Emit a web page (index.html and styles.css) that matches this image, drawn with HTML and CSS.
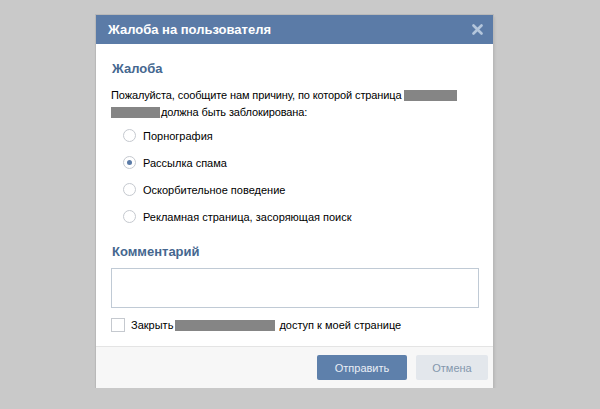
FILE: index.html
```html
<!DOCTYPE html>
<html lang="ru">
<head>
    <meta charset="UTF-8">
    <title>Жалоба на пользователя</title>
    <link rel="stylesheet" href="styles.css">
</head>
<body>
    <div class="box">
        <div class="box-title">
            <span>Жалоба на пользователя</span>
            <svg class="box-close" width="11" height="11" viewBox="0 0 11 11">
                <path d="M1.5 1.5 L9.5 9.5 M9.5 1.5 L1.5 9.5" stroke="#b4c6dc" stroke-width="2.6" stroke-linecap="round"/>
            </svg>
        </div>
        <div class="box-body">
            <h2>Жалоба</h2>
            <p class="reason-text">Пожалуйста, сообщите нам причину, по которой страница <span class="hidden-name name-a"></span><br><span class="hidden-name name-b"></span>должна быть заблокирована:</p>
            <div class="radios">
                <label class="radio"><span class="radio-dot"></span>Порнография</label>
                <label class="radio on"><span class="radio-dot"></span>Рассылка спама</label>
                <label class="radio"><span class="radio-dot"></span>Оскорбительное поведение</label>
                <label class="radio"><span class="radio-dot"></span>Рекламная страница, засоряющая поиск</label>
            </div>
            <h2 class="comment-head">Комментарий</h2>
            <div class="comment-field"></div>
            <label class="check"><span class="check-box"></span>Закрыть <span class="hidden-name name-c"></span>доступ к моей странице</label>
        </div>
        <div class="box-footer">
            <button class="btn btn-send">Отправить</button>
            <button class="btn btn-cancel">Отмена</button>
        </div>
    </div>
</body>
</html>
```

FILE: styles.css
```css
body {
    margin: 0;
    padding: 15px 0 0 96px;
    background: #c9c9c9;
    font-family: "Liberation Sans", Arial, sans-serif;
    font-size: 11px;
    color: #000;
}

.box {
    width: 397px;
    background: #fff;
    box-shadow: 0 0 0 1px #b9b9b9, 1px 2px 3px rgba(0, 0, 0, 0.15);
}

.box-title {
    height: 29px;
    background: #5b7ba7;
    color: #fff;
    font-weight: bold;
    font-size: 13px;
    display: flex;
    align-items: center;
    justify-content: space-between;
    padding: 0 10px 0 12px;
}

.box-close {
    display: block;
}

.box-body {
    padding: 17px 14px 14px 15px;
    height: 271px;
}

h2 {
    margin: 0 0 10px 1px;
    font-size: 13px;
    line-height: 16px;
    color: #45678f;
}

.reason-text {
    margin: 0;
    line-height: 17px;
    letter-spacing: -0.12px;
}

.hidden-name {
    display: inline-block;
    height: 11px;
    background: #858585;
    vertical-align: -2px;
}

.name-a { width: 53px; }
.name-b { width: 49px; margin-right: 1px; }
.name-c { width: 100px; margin: 0 4px 0 2px; }

.radios {
    margin: 1px 0 0 12px;
}

.radio {
    display: flex;
    align-items: center;
    height: 27px;
}

.radio-dot {
    width: 11px;
    height: 11px;
    border: 1px solid #c5c9cf;
    border-radius: 50%;
    margin-right: 7px;
    display: flex;
    align-items: center;
    justify-content: center;
    background: #fff;
}

.radio.on .radio-dot::after {
    content: "";
    width: 5px;
    height: 5px;
    border-radius: 50%;
    background: #5b7ba7;
}

.comment-head {
    margin-top: 14px;
    margin-bottom: 8px;
}

.comment-field {
    height: 38px;
    border: 1px solid #c0cad5;
}

.check {
    display: flex;
    align-items: center;
    margin-top: 10px;
}

.check-box {
    width: 12px;
    height: 12px;
    border: 1px solid #c5c9cf;
    margin-right: 6px;
}

.box-footer {
    height: 42px;
    background: #f7f7f7;
    border-top: 1px solid #e4e4e4;
    box-sizing: border-box;
    display: flex;
    align-items: center;
    justify-content: flex-end;
    gap: 9px;
    padding: 0 5px 0 0;
}

.btn {
    height: 25px;
    border: none;
    border-radius: 2px;
    font-family: "Liberation Sans", Arial, sans-serif;
    font-size: 11px;
    padding: 0;
}

.btn-send {
    width: 90px;
    background: #5e80ab;
    color: #e9eef5;
}

.btn-cancel {
    width: 72px;
    background: #e3e7ec;
    color: #8497ad;
}
```
